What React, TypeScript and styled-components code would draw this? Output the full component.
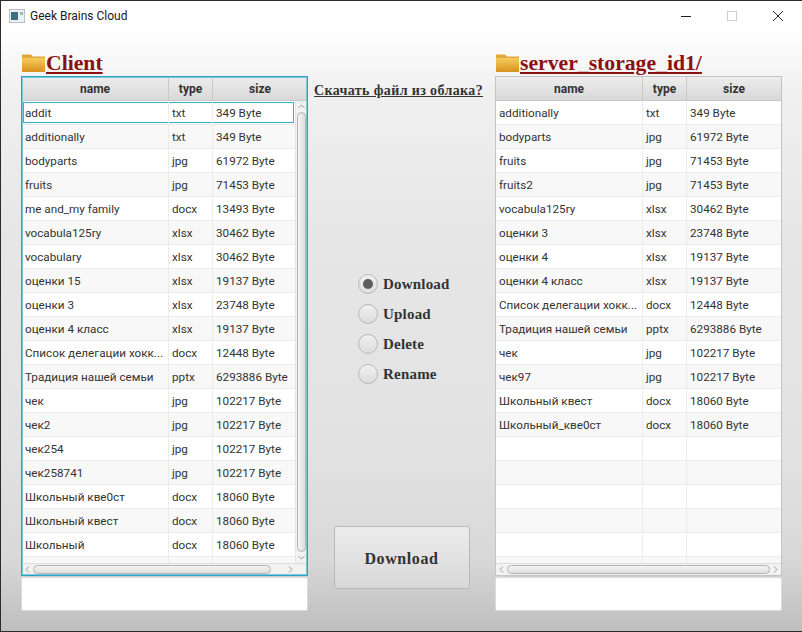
import styled, { createGlobalStyle } from "styled-components";

type FileRow = [string, string, string];

const clientFiles: FileRow[] = [
  ["addit", "txt", "349 Byte"],
  ["additionally", "txt", "349 Byte"],
  ["bodyparts", "jpg", "61972 Byte"],
  ["fruits", "jpg", "71453 Byte"],
  ["me and_my family", "docx", "13493 Byte"],
  ["vocabula125ry", "xlsx", "30462 Byte"],
  ["vocabulary", "xlsx", "30462 Byte"],
  ["оценки 15", "xlsx", "19137 Byte"],
  ["оценки 3", "xlsx", "23748 Byte"],
  ["оценки 4 класс", "xlsx", "19137 Byte"],
  ["Список делегации хокк...", "docx", "12448 Byte"],
  ["Традиция нашей семьи", "pptx", "6293886 Byte"],
  ["чек", "jpg", "102217 Byte"],
  ["чек2", "jpg", "102217 Byte"],
  ["чек254", "jpg", "102217 Byte"],
  ["чек258741", "jpg", "102217 Byte"],
  ["Школьный кве0ст", "docx", "18060 Byte"],
  ["Школьный квест", "docx", "18060 Byte"],
  ["Школьный", "docx", "18060 Byte"],
  ["", "", ""],
];

const serverFiles: FileRow[] = [
  ["additionally", "txt", "349 Byte"],
  ["bodyparts", "jpg", "61972 Byte"],
  ["fruits", "jpg", "71453 Byte"],
  ["fruits2", "jpg", "71453 Byte"],
  ["vocabula125ry", "xlsx", "30462 Byte"],
  ["оценки 3", "xlsx", "23748 Byte"],
  ["оценки 4", "xlsx", "19137 Byte"],
  ["оценки 4 класс", "xlsx", "19137 Byte"],
  ["Список делегации хокк...", "docx", "12448 Byte"],
  ["Традиция нашей семьи", "pptx", "6293886 Byte"],
  ["чек", "jpg", "102217 Byte"],
  ["чек97", "jpg", "102217 Byte"],
  ["Школьный квест", "docx", "18060 Byte"],
  ["Школьный_кве0ст", "docx", "18060 Byte"],
  ["", "", ""],
  ["", "", ""],
  ["", "", ""],
  ["", "", ""],
  ["", "", ""],
  ["", "", ""],
];

const GlobalStyle = createGlobalStyle`
  html, body {
    margin: 0;
    padding: 0;
  }
  * {
    box-sizing: border-box;
  }
`;

const Window = styled.div`
  width: 802px;
  height: 632px;
  border: 1px solid #2b2b2b;
  border-right: none;
  display: flex;
  flex-direction: column;
  overflow: hidden;
  font-family: Roboto, "Open Sans", sans-serif;
  background: #fff;
`;

const TitleBar = styled.div`
  height: 29px;
  flex: none;
  display: flex;
  align-items: center;
  padding-left: 8px;
  color: #1a1a1a;
  font-size: 12px;
`;

const AppTitle = styled.span`
  margin-left: 5px;
`;

const WindowControls = styled.div`
  margin-left: auto;
  padding-right: 1px;
  display: flex;
  align-items: center;
  color: #222;
`;

const ControlBox = styled.div`
  width: 46px;
  height: 29px;
  display: flex;
  align-items: center;
  justify-content: center;
`;

const Main = styled.div`
  flex: 1;
  display: grid;
  grid-template-columns: 287px 187px 287px;
  padding: 20px 20px 20px 20px;
  background: linear-gradient(#ffffff 0%, #f0f0f0 10%, #e6e6e6 35%, #e2e2e2 70%, #d8d8d8 88%, #bebebe 100%);
`;

const Pane = styled.section`
  display: flex;
  flex-direction: column;
`;

const PaneHeading = styled.h2`
  margin: 0;
  height: 26px;
  display: flex;
  align-items: center;
  font: bold 21.7px "Liberation Serif", serif;
  color: #8b1010;
`;

const HeadingText = styled.span`
  text-decoration: underline;
  text-decoration-thickness: 1.5px;
  text-underline-offset: 2px;
`;

const TableFrame = styled.div<{ $focused?: boolean }>`
  height: 500px;
  flex: none;
  display: flex;
  flex-direction: column;
  background: #fff;
  border: 1px solid ${(p) => (p.$focused ? "#2aa4c8" : "#c4c4c4")};
  outline: ${(p) => (p.$focused ? "1px solid #7cc5db" : "none")};
  outline-offset: -2px;
  overflow: hidden;
`;

const HeaderRow = styled.div`
  height: 24px;
  flex: none;
  display: flex;
  background: linear-gradient(#ededed, #d8d8d8);
  border-bottom: 1px solid #c8c8c8;
`;

const HeaderCell = styled.div<{ $width: number; $grow?: boolean }>`
  width: ${(p) => p.$width}px;
  flex: ${(p) => (p.$grow ? 1 : "none")};
  display: flex;
  align-items: center;
  justify-content: center;
  padding-top: 1px;
  border-right: ${(p) => (p.$grow ? "none" : "1px solid #c8c8c8")};
  font-size: 12px;
  font-weight: 700;
  color: #333;
`;

const TableBody = styled.div`
  flex: 1;
  display: flex;
  min-height: 0;
`;

const Rows = styled.div`
  flex: 1;
  min-width: 0;
  overflow: hidden;
`;

const Row = styled.div<{ $odd: boolean; $selected?: boolean }>`
  height: 24px;
  display: flex;
  background: ${(p) => (p.$odd ? "#f8f8f8" : "#fff")};
  border-bottom: 1px solid #ececec;
  box-shadow: ${(p) => (p.$selected ? "inset 0 0 0 1px #fff, inset 0 0 0 2px #35aed2" : "none")};
`;

const Cell = styled.div<{ $width: number; $grow?: boolean }>`
  width: ${(p) => p.$width}px;
  flex: ${(p) => (p.$grow ? 1 : "none")};
  padding: 1px 0 0 3px;
  display: flex;
  align-items: center;
  border-right: ${(p) => (p.$grow ? "none" : "1px solid #ececec")};
  font-size: 11.7px;
  color: #333;
  white-space: nowrap;
  overflow: hidden;
`;

const VScroll = styled.div`
  width: 12px;
  flex: none;
  display: flex;
  flex-direction: column;
  align-items: center;
  background: #f2f2f2;
  border-left: 1px solid #e4e4e4;
`;

const HScroll = styled.div`
  height: 12px;
  flex: none;
  display: flex;
  align-items: center;
  background: #f2f2f2;
  border-top: 1px solid #dcdcdc;
`;

const ArrowSlot = styled.div`
  flex: none;
  width: 11px;
  height: 11px;
  display: flex;
  align-items: center;
  justify-content: center;
`;

const VThumb = styled.div`
  flex: 1;
  width: 9px;
  border: 1px solid #b4b4b4;
  border-radius: 5px;
  background: linear-gradient(90deg, #f4f4f4, #dedede);
`;

const HThumb = styled.div<{ $gap: number }>`
  flex: 1;
  height: 9px;
  margin-right: ${(p) => p.$gap}px;
  border: 1px solid #b4b4b4;
  border-radius: 5px;
  background: linear-gradient(#f4f4f4, #dedede);
`;

const ScrollCorner = styled.div`
  flex: none;
  width: 11px;
`;

const NoteArea = styled.div`
  margin-top: 1px;
  height: 34px;
  flex: none;
  background: #fff;
  border: 1px solid #dcdcdc;
  border-radius: 2px;
`;

const Center = styled.div`
  display: flex;
  flex-direction: column;
  align-items: center;
`;

const Question = styled.div`
  margin-top: 33px;
  align-self: flex-start;
  margin-left: 6px;
  font: bold 14px "Liberation Serif", serif;
  color: #333;
  text-decoration: underline;
  white-space: nowrap;
  letter-spacing: 0.38px;
`;

const RadioGroup = styled.div`
  margin-top: 175px;
  width: 100%;
  padding-left: 50px;
  display: flex;
  flex-direction: column;
  gap: 10px;
`;

const RadioRow = styled.div`
  height: 20px;
  display: flex;
  align-items: center;
  gap: 5px;
  font: bold 15px "Liberation Serif", serif;
  color: #333;
  letter-spacing: 0.2px;
`;

const RadioDot = styled.div<{ $checked?: boolean }>`
  width: 20px;
  height: 20px;
  flex: none;
  border-radius: 50%;
  border: 1px solid #b8b8b8;
  background: linear-gradient(#f0f0f0, #dcdcdc);
  display: flex;
  align-items: center;
  justify-content: center;

  &::after {
    content: "";
    display: ${(p) => (p.$checked ? "block" : "none")};
    width: 10px;
    height: 10px;
    border-radius: 50%;
    background: #5c5c5c;
  }
`;

const BigButton = styled.button`
  margin-top: 142px;
  width: 136px;
  height: 63px;
  flex: none;
  padding: 2px 0 0;
  border: 1px solid #b8b8b8;
  border-radius: 3px;
  background: linear-gradient(#ececec, #d8d8d8);
  font: bold 16px "Liberation Serif", serif;
  color: #333;
  letter-spacing: 0.6px;
`;

const FolderIcon = styled.svg`
  flex: none;
  margin-left: 1px;
`;

const Folder = () => (
  <FolderIcon width="24" height="20" viewBox="0 0 24 20">
    <defs>
      <linearGradient id="folderFill" x1="0" y1="0" x2="0" y2="1">
        <stop offset="0" stopColor="#f7cc5c" />
        <stop offset="1" stopColor="#d8921e" />
      </linearGradient>
    </defs>
    <path d="M0 1.5 H9 L11 3.5 H23 V19 H0 Z" fill="#e0a83a" />
    <path d="M0 5 H23 V19 H1 Q0 19 0 18 Z" fill="url(#folderFill)" />
  </FolderIcon>
);

const AppIcon = () => (
  <svg width="16" height="14" viewBox="0 0 16 14">
    <rect x="0.5" y="0.5" width="15" height="13" fill="#eef1f2" stroke="#b9bfc2" />
    <rect x="2" y="3" width="7" height="8" fill="#3f6f78" />
    <rect x="11" y="3" width="3" height="3" fill="#9fb8bf" />
  </svg>
);

const Chevron = ({ dir }: { dir: "up" | "down" | "left" | "right" }) => {
  const paths = {
    up: "M1.5 6 L4.5 3 L7.5 6",
    down: "M1.5 3 L4.5 6 L7.5 3",
    left: "M6 1.5 L3 4.5 L6 7.5",
    right: "M3 1.5 L6 4.5 L3 7.5",
  };
  return (
    <svg width="9" height="9" viewBox="0 0 9 9">
      <path d={paths[dir]} fill="none" stroke="#9a9a9a" strokeWidth="1" />
    </svg>
  );
};

type TableProps = {
  rows: FileRow[];
  focused?: boolean;
  scrollY?: boolean;
};

const FileTable = ({ rows, focused, scrollY }: TableProps) => (
  <TableFrame $focused={focused}>
    <HeaderRow>
      <HeaderCell $width={147}>name</HeaderCell>
      <HeaderCell $width={44}>type</HeaderCell>
      <HeaderCell $width={94} $grow>size</HeaderCell>
    </HeaderRow>
    <TableBody>
      <Rows>
        {rows.map((row, i) => (
          <Row key={i} $odd={i % 2 === 1} $selected={focused && i === 0}>
            <Cell $width={147}>{row[0]}</Cell>
            <Cell $width={44}>{row[1]}</Cell>
            <Cell $width={90} $grow>{row[2]}</Cell>
          </Row>
        ))}
      </Rows>
      {scrollY && (
        <VScroll>
          <ArrowSlot><Chevron dir="up" /></ArrowSlot>
          <VThumb />
          <ArrowSlot><Chevron dir="down" /></ArrowSlot>
        </VScroll>
      )}
    </TableBody>
    <HScroll>
      <ArrowSlot><Chevron dir="left" /></ArrowSlot>
      <HThumb $gap={scrollY ? 14 : 0} />
      <ArrowSlot><Chevron dir="right" /></ArrowSlot>
      {scrollY && <ScrollCorner />}
    </HScroll>
  </TableFrame>
);

export default function App() {
  return (
    <>
      <GlobalStyle />
      <Window>
        <TitleBar>
          <AppIcon />
          <AppTitle>Geek Brains Cloud</AppTitle>
          <WindowControls>
            <ControlBox>
              <svg width="12" height="12" viewBox="0 0 12 12">
                <path d="M1 6.5 H11" stroke="#222" strokeWidth="1" />
              </svg>
            </ControlBox>
            <ControlBox>
              <svg width="12" height="12" viewBox="0 0 12 12">
                <rect x="1.5" y="1.5" width="9" height="9" fill="none" stroke="#cfcfcf" />
              </svg>
            </ControlBox>
            <ControlBox>
              <svg width="12" height="12" viewBox="0 0 12 12">
                <path d="M1 1 L11 11 M11 1 L1 11" stroke="#222" strokeWidth="1" />
              </svg>
            </ControlBox>
          </WindowControls>
        </TitleBar>
        <Main>
          <Pane>
            <PaneHeading>
              <Folder />
              <HeadingText>Client</HeadingText>
            </PaneHeading>
            <FileTable rows={clientFiles} focused scrollY />
            <NoteArea />
          </Pane>
          <Center>
            <Question>Скачать файл из облака?</Question>
            <RadioGroup>
              <RadioRow><RadioDot $checked />Download</RadioRow>
              <RadioRow><RadioDot />Upload</RadioRow>
              <RadioRow><RadioDot />Delete</RadioRow>
              <RadioRow><RadioDot />Rename</RadioRow>
            </RadioGroup>
            <BigButton>Download</BigButton>
          </Center>
          <Pane>
            <PaneHeading>
              <Folder />
              <HeadingText>server_storage_id1/</HeadingText>
            </PaneHeading>
            <FileTable rows={serverFiles} />
            <NoteArea />
          </Pane>
        </Main>
      </Window>
    </>
  );
}
